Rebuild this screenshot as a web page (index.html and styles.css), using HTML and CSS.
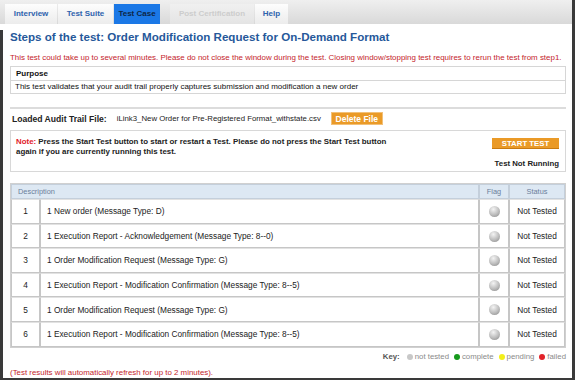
FILE: index.html
```html
<!DOCTYPE html>
<html lang="en">

<head>
  <meta charset="UTF-8">
  <meta name="viewport" content="width=device-width, initial-scale=1.0">
  <title>Test Case</title>
  <link rel="stylesheet" href="styles.css">
</head>

<body>
  <div class="frame">
    <div class="tabs">
      <div class="tab tab_interview">Interview</div>
      <div class="tab tab_suite">Test Suite</div>
      <div class="tab tab_case active">Test Case</div>
      <div class="tab tab_post disabled">Post Certification</div>
      <div class="tab tab_help">Help</div>
    </div>

    <div class="content">
      <h1 class="title">Steps of the test: Order Modification Request for On-Demand Format</h1>
      <p class="warn">This test could take up to several minutes. Please do not close the window during the test. Closing window/stopping test requires to rerun the test from step1.</p>

      <div class="purpose">
        <div class="purpose_head">Purpose</div>
        <div class="purpose_body">This test validates that your audit trail properly captures submission and modification a new order</div>
      </div>

      <div class="audit">
        <span class="audit_label">Loaded Audit Trail File:</span>
        <span class="audit_file">iLink3_New Order for Pre-Registered Format_withstate.csv</span>
        <button class="btn btn_delete">Delete File</button>
      </div>

      <div class="note">
        <p class="note_text"><span class="note_key">Note:</span>Press the Start Test button to start or restart a Test. Please do not press the Start Test button again if you are currently running this test.</p>
        <div class="note_side">
          <button class="btn btn_start">START TEST</button>
          <span class="run_state">Test Not Running</span>
        </div>
      </div>

      <table class="steps">
        <thead>
          <tr>
            <th colspan="2" class="th_desc">Description</th>
            <th class="th_flag">Flag</th>
            <th class="th_status">Status</th>
          </tr>
        </thead>
        <tbody>
          <tr>
            <td class="num">1</td>
            <td class="desc">1 New order (Message Type: D)</td>
            <td class="flag"><span class="ball"></span></td>
            <td class="status">Not Tested</td>
          </tr>
          <tr>
            <td class="num">2</td>
            <td class="desc">1 Execution Report - Acknowledgement (Message Type: 8--0)</td>
            <td class="flag"><span class="ball"></span></td>
            <td class="status">Not Tested</td>
          </tr>
          <tr>
            <td class="num">3</td>
            <td class="desc">1 Order Modification Request (Message Type: G)</td>
            <td class="flag"><span class="ball"></span></td>
            <td class="status">Not Tested</td>
          </tr>
          <tr>
            <td class="num">4</td>
            <td class="desc">1 Execution Report - Modification Confirmation (Message Type: 8--5)</td>
            <td class="flag"><span class="ball"></span></td>
            <td class="status">Not Tested</td>
          </tr>
          <tr>
            <td class="num">5</td>
            <td class="desc">1 Order Modification Request (Message Type: G)</td>
            <td class="flag"><span class="ball"></span></td>
            <td class="status">Not Tested</td>
          </tr>
          <tr>
            <td class="num">6</td>
            <td class="desc">1 Execution Report - Modification Confirmation (Message Type: 8--5)</td>
            <td class="flag"><span class="ball"></span></td>
            <td class="status">Not Tested</td>
          </tr>
        </tbody>
      </table>

      <div class="key">
        <b>Key:</b>
        <span class="dot dot_gray"></span>not tested
        <span class="dot dot_green"></span>complete
        <span class="dot dot_yellow"></span>pending
        <span class="dot dot_red"></span>failed
      </div>

      <p class="refresh">(Test results will automatically refresh for up to 2 minutes).</p>
    </div>
  </div>
</body>

</html>
```

FILE: styles.css
```css
* {
  margin: 0;
  padding: 0;
  box-sizing: border-box;
}

body {
  font-family: "Liberation Sans", Arial, sans-serif;
  background: #fff;
  color: #111;
}

.frame {
  width: 575px;
  height: 380px;
  border-right: 3px solid #3a3a3a;
  border-bottom: 2px solid #3a3a3a;
  overflow: hidden;
}

/* tab bar */
.tabs {
  display: flex;
  align-items: flex-end;
  height: 24px;
  padding-left: 5px;
  gap: 1px;
  background: linear-gradient(#efefef, #d9d9d9);
}

.tab {
  height: 20px;
  line-height: 20px;
  text-align: center;
  font-size: 8px;
  font-weight: bold;
  color: #2f62ad;
  background: linear-gradient(#fdfdfd, #ececec);
  white-space: nowrap;
}

.tab_interview {
  width: 52px;
}

.tab_suite {
  width: 55px;
}

.tab_case {
  width: 46px;
}

.tab_post {
  width: 84px;
  margin-left: 9px;
}

.tab_help {
  width: 33px;
}

.tab.active {
  background: #1b78e6;
  color: #0e2746;
}

.tab.disabled {
  color: #cdcdcd;
  background: linear-gradient(#f0f0f0, #e4e4e4);
}

.content {
  height: 356px;
  padding: 0 6px 0 7px;
  border-left: 3px solid #3a3a3a;
}

.title {
  margin-top: 6px;
  font-size: 11.6px;
  line-height: 14px;
  color: #26589a;
}

.warn {
  margin-top: 9px;
  font-size: 7.95px;
  line-height: 10px;
  color: #c4242b;
  white-space: nowrap;
}

/* purpose */
.purpose {
  margin-top: 3px;
  border: 1px solid #d6d6d6;
  font-size: 8px;
}

.purpose_head {
  height: 14px;
  line-height: 13px;
  padding-left: 5px;
  font-weight: bold;
  border-bottom: 1px solid #d6d6d6;
}

.purpose_body {
  height: 12px;
  line-height: 12px;
  padding-left: 4px;
}

/* audit file */
.audit {
  display: flex;
  align-items: center;
  margin-top: 13px;
  padding: 3px 2px 2px;
  border-top: 2px solid #dcdcdc;
  height: 20px;
}

.audit_label {
  font-size: 8.6px;
  font-weight: bold;
  color: #222;
}

.audit_file {
  margin-left: 10px;
  font-size: 7.8px;
  color: #222;
}

.btn {
  border: none;
  font-family: "Liberation Sans", Arial, sans-serif;
  font-weight: bold;
  color: #fff;
  background: #ea9a27;
}

.btn_delete {
  margin-left: 10px;
  width: 52px;
  height: 13px;
  font-size: 8.5px;
  border: 1px solid #f2c078;
}

/* note */
.note {
  display: flex;
  justify-content: space-between;
  margin-top: 3px;
  height: 42px;
  border: 1px solid #d8d8d8;
  padding: 6px 6px 0 5px;
}

.note_text {
  width: 382px;
  font-size: 7.9px;
  line-height: 9.5px;
  font-weight: bold;
  color: #222;
}

.note_key {
  margin-right: 2px;
  color: #e2202a;
}

.note_side {
  display: flex;
  flex-direction: column;
  align-items: flex-end;
  padding-top: 1px;
}

.btn_start {
  width: 67px;
  height: 11px;
  font-size: 7.8px;
  border-bottom: 1px solid #c87a10;
}

.run_state {
  margin-top: 10px;
  font-size: 7.8px;
  font-weight: bold;
  color: #222;
}

/* steps table */
.steps {
  margin-top: 11px;
  width: 556px;
  border-collapse: separate;
  border-spacing: 0;
  border: 1px solid #d0d0d0;
  font-size: 8.3px;
  color: #222;
}

.steps th {
  height: 15px;
  background: #dde8f3;
  color: #6b809b;
  font-size: 7.4px;
  font-weight: normal;
  border: 1px solid #c4cfdb;
}

.th_desc {
  text-align: left;
  padding-left: 6px;
}

.th_flag {
  width: 30px;
}

.th_status {
  width: 56px;
}

.steps td {
  height: 24.6px;
  border: 1px solid #c6c6c6;
  border-top-color: #e2e2e2;
}

.num {
  width: 29px;
  text-align: center;
}

.desc {
  padding-left: 6px;
}

.flag {
  text-align: center;
}

.status {
  text-align: center;
}

.ball {
  display: inline-block;
  width: 11px;
  height: 11px;
  border-radius: 50%;
  vertical-align: middle;
  background: radial-gradient(circle at 40% 30%, #f4f4f4, #bcbcbc 55%, #858585);
}

/* key */
.key {
  display: flex;
  justify-content: flex-end;
  align-items: center;
  gap: 2px;
  margin-top: 4px;
  height: 10px;
  font-size: 7.8px;
  color: #8a8a8a;
}

.key b {
  color: #555;
  margin-right: 2px;
}

.dot {
  display: inline-block;
  width: 6px;
  height: 6px;
  margin-left: 3px;
  border-radius: 50%;
}

.dot_gray {
  background: #c8c8c8;
}

.dot_green {
  background: #169a1c;
}

.dot_yellow {
  background: #f2ef1a;
}

.dot_red {
  background: #e2232a;
}

.refresh {
  margin-top: 6px;
  font-size: 7.9px;
  color: #c4242b;
}
```
